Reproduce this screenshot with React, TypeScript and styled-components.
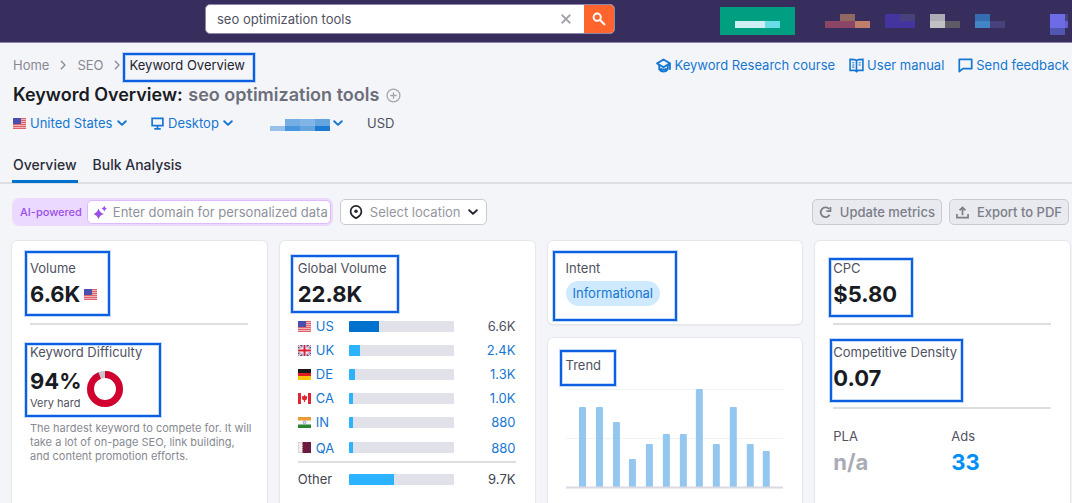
import React from "react";
import styled, { createGlobalStyle } from "styled-components";

const GlobalStyle = createGlobalStyle`
  *, *::before, *::after { box-sizing: border-box; }
  html, body { margin: 0; background: #f4f5f9; }
  body { font-family: Inter, "Liberation Sans", sans-serif; font-size: 13px; line-height: 16px; color: #50525f; }
  button, input, select { font: inherit; color: inherit; }
  h1, h2, p, ol { margin: 0; padding: 0; font-weight: 400; }
  a { color: #1577d1; text-decoration: none; }
  svg { display: block; flex: none; }
`;

/* ---------- page frame ---------- */

const Page = styled.div`
  height: 100vh;
  overflow-x: hidden;
  overflow-y: auto;
  scrollbar-width: none;
`;

const TopBar = styled.header`
  display: flex;
  align-items: flex-start;
  height: 43px;
  padding: 4px 4px 0 205px;
  background: #382e5e;
  border-bottom: 1px solid #8f87aa;
`;

const SearchForm = styled.form`
  display: flex;
  flex: 0 1 410px;
  height: 30px;
  border: 1px solid #8f87aa;
  border-radius: 5px;
  background: #fff;
  overflow: hidden;
`;

const SearchInput = styled.input`
  flex: 1;
  min-width: 0;
  padding: 0 11px;
  border: 0;
  outline: 0;
  background: transparent;
  color: #50525f;
`;

const IconButton = styled.button<{ $fill?: string; $width: number }>`
  display: flex;
  align-items: center;
  justify-content: center;
  width: ${(p) => p.$width}px;
  padding: 0;
  border: 0;
  background: ${(p) => p.$fill ?? "transparent"};
  cursor: pointer;
`;

const Account = styled.div`
  display: flex;
  align-items: flex-start;
  gap: 15px;
  margin-left: auto;
  padding-top: 3px;
`;

const AccountItem = styled.div<{ $before?: number; $drop?: number }>`
  margin-left: ${(p) => p.$before ?? 0}px;
  padding-top: ${(p) => p.$drop ?? 0}px;
`;

const Content = styled.main`
  padding-bottom: 16px;
`;

const Row = styled.div`
  display: flex;
  align-items: center;
`;

const CrumbRow = styled(Row)`
  justify-content: space-between;
  height: 24px;
  margin-top: 10px;
  padding: 0 3px 0 13px;
`;

const Crumbs = styled.ol`
  display: flex;
  align-items: center;
  list-style: none;
`;

const Crumb = styled.li<{ $gap: number }>`
  position: relative;
  display: flex;
  align-items: center;
  margin-right: ${(p) => p.$gap}px;
  color: #23242e;
  a { color: #878992; }
`;

const HelpLinks = styled.nav`
  display: flex;
  gap: 14px;
  a { display: flex; align-items: center; gap: 3px; }
`;

const TitleRow = styled(Row)`
  gap: 7px;
  height: 32px;
  margin-top: 2px;
  padding-left: 13px;
`;

const Title = styled.h1`
  font-size: 18px;
  line-height: 24px;
  font-weight: 600;
  color: #191b23;
  span { margin-left: 1px; color: #6c6e79; }
`;

const PickerRow = styled(Row)`
  gap: 24px;
  height: 24px;
  padding-left: 13px;
`;

const Picker = styled.label`
  display: flex;
  align-items: center;
  gap: 4px;
  color: #1577d1;
`;

const PlainSelect = styled.select`
  appearance: none;
  padding: 0;
  border: 0;
  outline: 0;
  background: transparent;
  cursor: pointer;
`;

const MaskedPicker = styled.button`
  display: flex;
  align-items: center;
  gap: 3px;
  margin-left: 13px;
  padding: 4px 0 0;
  border: 0;
  background: transparent;
  svg:last-child { margin-bottom: 4px; }
`;

const Tabs = styled.nav`
  display: flex;
  gap: 14px;
  margin-top: 16px;
  padding-left: 12px;
  border-bottom: 2px solid #dcdee4;
`;

const Tab = styled.a<{ $active?: boolean }>`
  height: 32px;
  margin-bottom: -1px;
  padding: 6px 1px 0;
  border-bottom: 3px solid ${(p) => (p.$active ? "#0071cd" : "transparent")};
  font-size: 14px;
  font-weight: 500;
  color: #2b2d38;
`;

const Toolbar = styled(Row)`
  gap: 7px;
  height: 28px;
  margin-top: 14px;
  padding: 0 3px 0 12px;
`;

const AiField = styled.label`
  display: flex;
  align-items: center;
  height: 28px;
  padding: 2px 2px 2px 8px;
  border-radius: 7px;
  background: #ecd9ff;
  color: #9a50e6;
  font-size: 11px;
  font-weight: 500;
`;

const AiBox = styled.span`
  display: flex;
  align-items: center;
  gap: 6px;
  width: 244px;
  height: 24px;
  margin-left: 5px;
  padding-left: 6px;
  border: 1px solid #dcbcfb;
  border-radius: 5px;
  background: #fff;
`;

const AiInput = styled.input`
  flex: 1;
  min-width: 0;
  padding: 0;
  border: 0;
  outline: 0;
  background: transparent;
  font-size: 13px;
  font-weight: 400;
  &::placeholder { color: #8f919b; opacity: 1; }
`;

const LocationField = styled.label`
  display: flex;
  align-items: center;
  gap: 7px;
  height: 26px;
  padding: 0 8px;
  border: 1px solid #c9cad2;
  border-radius: 5px;
  background: #fff;
  color: #94959f;
`;

const ToolButton = styled.button`
  display: flex;
  align-items: center;
  gap: 8px;
  height: 26px;
  padding: 0 6px;
  border: 1px solid #c9cad2;
  border-radius: 5px;
  background: #e9eaf0;
  color: #7b7d88;
  font-weight: 500;
`;

const ToolActions = styled.div`
  display: flex;
  gap: 7px;
  margin-left: auto;
`;

/* ---------- cards ---------- */

const CardGrid = styled.div`
  display: grid;
  grid-template-columns: repeat(4, minmax(0, 1fr));
  gap: 13px;
  margin-top: 15px;
  padding: 0 2px 0 12px;
`;

const Stack = styled.div`
  display: flex;
  flex-direction: column;
  gap: 14px;
`;

const Card = styled.section<{ $grow?: boolean }>`
  flex: ${(p) => (p.$grow ? 1 : "none")};
  padding: 19px 19px 24px 18px;
  border-radius: 5px;
  background: #fff;
  box-shadow: 0 0 0 1px #e6e7ed, 0 1px 2px #d0d2da;
`;

const IntentCard = styled(Card)`
  padding-bottom: 18px;
`;

const Metric = styled.div`
  position: relative;
`;

const Label = styled.h2`
  font-size: 13px;
  line-height: 16px;
  color: #50525f;
`;

const Value = styled.p<{ $color?: string }>`
  display: flex;
  align-items: center;
  gap: 4px;
  font-size: 22px;
  line-height: 28px;
  margin-top: 4px;
  font-weight: 700;
  color: ${(p) => p.$color ?? "#191b23"};
`;

const Divider = styled.hr`
  height: 2px;
  margin: 15px 0 19px;
  border: 0;
  background: #dddde2;
`;

const Difficulty = styled(Row)`
  gap: 4px;
  margin-top: 7px;
`;

const Small = styled.p`
  font-size: 11px;
  line-height: 16px;
`;

const DifficultyScore = styled.div`
  ${Value} { margin-top: 0; }
`;

const Hint = styled.p`
  margin: 10px -6px 0 0;
  font-size: 11px;
  line-height: 14px;
  color: #878992;
`;

const Pair = styled.div`
  display: grid;
  grid-template-columns: 118px 1fr;
`;

const Tag = styled.span`
  display: inline-block;
  margin-top: 5px;
  padding: 4px 7px 5px;
  border-radius: 13px;
  background: #cfe9ff;
  color: #1577d1;
`;

/* Highlight frame that lies over the block it marks. */
const Callout = styled.span<{ $top: number; $left: number; $width: number; $height: number }>`
  position: absolute;
  top: ${(p) => p.$top}px;
  left: ${(p) => p.$left}px;
  width: ${(p) => p.$width}px;
  height: ${(p) => p.$height}px;
  border: 2px solid #0b5fe0;
  box-shadow: 0 0 0 1px rgba(120, 170, 245, 0.45), inset 0 0 0 1px rgba(120, 170, 245, 0.45);
  pointer-events: none;
`;

const CountryTable = styled.table`
  width: 100%;
  margin-top: 6px;
  border-collapse: collapse;
  th, td { height: 24px; padding: 0; font-weight: 400; text-align: left; }
  th { width: 51px; }
  td:last-child { text-align: right; }
  tbody tr:last-child > * { height: 28px; }
  tfoot th, tfoot td { height: 33px; border-top: 2px solid #dddde2; color: #43454f; }
`;

const CountryName = styled.span`
  display: flex;
  align-items: center;
  gap: 5px;
`;

const Track = styled.div`
  width: 105px;
  height: 11px;
  border-radius: 1px;
  background: #e0e1e9;
  overflow: hidden;
`;

const Fill = styled.div<{ $dark?: boolean }>`
  height: 100%;
  background: ${(p) => (p.$dark ? "#0071cd" : "#2bb3ff")};
`;

const Chart = styled.svg`
  width: 100%;
  height: auto;
  margin-top: 16px;
`;

/* ---------- drawings ---------- */

type Tile = [number, number, number, number, string];

function Mosaic({ w, h, tiles }: { w: number; h: number; tiles: Tile[] }) {
  return (
    <svg width={w} height={h} shapeRendering="crispEdges" aria-hidden="true">
      {tiles.map(([x, y, tw, th, c], i) => (
        <rect key={i} x={x} y={y} width={tw} height={th} fill={c} />
      ))}
    </svg>
  );
}

function Chevron({ right, color = "currentColor", size = 10 }: { right?: boolean; color?: string; size?: number }) {
  return (
    <svg width={size} height={size} viewBox="0 0 10 10" fill="none" stroke={color} strokeWidth={right ? 1.3 : 1.9} strokeLinecap="round" strokeLinejoin="round" aria-hidden="true">
      <path d={right ? "M3.3 1.3 7 5 3.3 8.7" : "M1.2 3.2 5 6.9 8.8 3.2"} />
    </svg>
  );
}

function Flag({ code }: { code: string }) {
  const art: Record<string, React.ReactNode> = {
    US: (
      <>
        <rect width="13" height="11" fill="#f0b3b8" />
        {[0, 2, 4, 6, 8, 10].map((y) => (
          <rect key={y} y={y} width="13" height="1" fill="#e0636c" />
        ))}
        <rect width="8" height="6" fill="#4a4fae" />
      </>
    ),
    UK: (
      <>
        <rect width="13" height="11" fill="#3d4f9b" />
        <path d="M0 0 13 11M13 0 0 11" stroke="#fff" strokeWidth="2" />
        <path d="M0 0 13 11M13 0 0 11" stroke="#d8414c" strokeWidth=".7" />
        <path d="M6.5 0v11M0 5.5h13" stroke="#fff" strokeWidth="4" />
        <path d="M6.5 0v11M0 5.5h13" stroke="#d81f34" strokeWidth="2" />
      </>
    ),
    DE: (
      <>
        <rect width="13" height="4" fill="#1b1b1b" />
        <rect y="4" width="13" height="4" fill="#e01b22" />
        <rect y="7" width="13" height="4" fill="#fbc50f" />
      </>
    ),
    CA: (
      <>
        <rect width="13" height="11" fill="#fff" />
        <rect width="3" height="11" fill="#e02632" />
        <rect x="10" width="3" height="11" fill="#e02632" />
        <path d="M6.5 1.5 7.5 3.3 9.2 3.3 8.8 6.5 7 7.5v1.5h-1V7.5L4.2 6.5 3.8 3.3 5.5 3.3z" fill="#e02632" />
      </>
    ),
    IN: (
      <>
        <rect width="13" height="11" fill="#f7f8fa" />
        <rect width="13" height="3.5" fill="#ea9b32" />
        <rect y="7.5" width="13" height="3.5" fill="#2a8434" />
        <circle cx="6.5" cy="5.5" r="1.3" fill="none" stroke="#6c7fbd" strokeWidth=".8" />
      </>
    ),
    QA: (
      <>
        <rect width="13" height="11" fill="#6e1a3f" />
        <path d="M0 0h4l1 1-1 1 1 1.2-1 1.2 1 1.1-1 1.1 1 1.2-1 1.2 1 1-1 1H0z" fill="#f2eef0" />
        <path d="M.3 0v11M0 .3h4M0 10.7h4" stroke="#c3bec5" strokeWidth=".6" />
      </>
    ),
  };
  return (
    <svg width="13" height="11" viewBox="0 0 13 11" aria-hidden="true">
      {art[code]}
    </svg>
  );
}

const Glyph = ({ size = 14, children, w = 1.6, color = "currentColor" }: { size?: number; children: React.ReactNode; w?: number; color?: string }) => (
  <svg width={size} height={size} viewBox="0 0 14 14" fill="none" stroke={color} strokeWidth={w} aria-hidden="true">
    {children}
  </svg>
);

const countries = [
  { code: "US", share: 29, volume: "6.6K" },
  { code: "UK", share: 11, volume: "2.4K" },
  { code: "DE", share: 6, volume: "1.3K" },
  { code: "CA", share: 4, volume: "1.0K" },
  { code: "IN", share: 4, volume: "880" },
  { code: "QA", share: 4, volume: "880" },
];

const trend = [80, 80, 65, 28, 43, 53, 53, 98, 43, 80, 43, 36];

function TrendChart() {
  return (
    <Chart viewBox="0 0 218 100" role="img" aria-label="Trend by month">
      <path d="M0 .5h218M0 49.5h218" stroke="#f1f2f5" />
      {trend.map((h, i) => (
        <path key={i} d={`M${Math.round(13 + i * 16.75)} 98v-${h - 1}q0-1 1-1h5q1 0 1 1v${h - 1}z`} fill="#93c7ef" />
      ))}
      <path d="M0 98.5h218" stroke="#d9dae2" strokeWidth="2" />
    </Chart>
  );
}

export default function App() {
  return (
    <Page>
      <GlobalStyle />
      <TopBar>
        <SearchForm>
          <SearchInput aria-label="Search" defaultValue="seo optimization tools" />
          <IconButton type="button" aria-label="Clear" $width={36}>
            <Glyph size={12} color="#a3a4ae" w={2.2}><path d="m2 2 10 10M12 2 2 12" /></Glyph>
          </IconButton>
          <IconButton type="submit" aria-label="Run search" $width={30} $fill="#ff642d">
            <Glyph color="#fff" w={2}><circle cx="5.2" cy="5.2" r="3.6" /><path d="m8 8 5 5" /></Glyph>
          </IconButton>
        </SearchForm>
        <Account>
          <AccountItem>
            <Mosaic w={75} h={28} tiles={[[0, 0, 75, 28, "#009f81"], [15, 14, 30, 7, "#cdeff4"], [45, 14, 15, 7, "#69dde6"]]} />
          </AccountItem>
          <AccountItem $before={15} $drop={7}>
            <Mosaic w={45} h={14} tiles={[[15, 0, 15, 7, "#8f6962"], [0, 7, 30, 7, "#8b4565"], [30, 7, 15, 7, "#c07e6d"]]} />
          </AccountItem>
          <AccountItem $drop={7}>
            <Mosaic w={30} h={14} tiles={[[0, 0, 30, 14, "#4334a0"], [15, 0, 15, 7, "#47427c"]]} />
          </AccountItem>
          <AccountItem $drop={7}>
            <Mosaic w={30} h={14} tiles={[[0, 0, 15, 7, "#aeadb6"], [0, 7, 15, 7, "#c1c1c4"], [15, 7, 15, 7, "#5f5b66"]]} />
          </AccountItem>
          <AccountItem $drop={7}>
            <Mosaic w={30} h={14} tiles={[[0, 0, 15, 7, "#366db1"], [0, 7, 15, 7, "#4286c6"], [15, 7, 15, 7, "#47427c"]]} />
          </AccountItem>
          <AccountItem $before={30} $drop={7}>
            <Mosaic w={18} h={21} tiles={[[0, 0, 15, 14, "#6e6be6"], [15, 0, 3, 7, "#47427c"], [15, 7, 3, 7, "#6460c8"], [0, 14, 15, 7, "#5156b3"]]} />
          </AccountItem>
        </Account>
      </TopBar>

      <Content>
        <CrumbRow>
          <Crumbs>
            <Crumb $gap={9}><a href="#home">Home</a></Crumb>
            <Crumb $gap={9}><Chevron right color="#878992" /></Crumb>
            <Crumb $gap={8}><a href="#seo">SEO</a></Crumb>
            <Crumb $gap={8}><Chevron right color="#878992" /></Crumb>
            <Crumb $gap={0} aria-current="page">
              Keyword Overview
              <Callout $top={-4} $left={-7} $width={132} $height={29} />
            </Crumb>
          </Crumbs>
          <HelpLinks>
            <a href="#course">
              <Glyph size={15} w={1.7}>
                <path d="M7 1.4 13 5 7 8.6 1 5z" strokeLinejoin="round" />
                <path d="M3 6.5v4c1 1.6 2.5 2.2 4 2.2s3-.6 4-2.2v-4M13 5v6M4 9.8c2 1.3 4 1.3 6 0" />
              </Glyph>
              Keyword Research course
            </a>
            <a href="#manual">
              <Glyph size={15} w={1.5}>
                <path d="M7 2.2C6 1.4 4.5 1.3 1 1.3v10.2h4.5L7 12.7l1.5-1.2H13V1.3C9.5 1.3 8 1.4 7 2.2v11" />
                <path d="M3 4.5h2M3 6.5h2M3 8.5h2M9 4.5h2M9 6.5h2" strokeWidth="1" />
              </Glyph>
              User manual
            </a>
            <a href="#feedback">
              <Glyph size={15} w={1.6}><path d="M1.2 1.3h11.6v8.7H4.5L1.2 12.8z" strokeLinejoin="round" /></Glyph>
              Send feedback
            </a>
          </HelpLinks>
        </CrumbRow>

        <TitleRow>
          <Title>Keyword Overview: <span>seo optimization tools</span></Title>
          <IconButton type="button" aria-label="Add keyword" $width={15}>
            <Glyph size={15} color="#a3a5ae" w={1.2}><circle cx="7" cy="7" r="6" /><path d="M7 4v6M4 7h6" /></Glyph>
          </IconButton>
        </TitleRow>

        <PickerRow>
          <Picker>
            <Flag code="US" />
            <PlainSelect aria-label="Country"><option>United States</option></PlainSelect>
            <Chevron />
          </Picker>
          <Picker>
            <Glyph size={13} w={1.8}><path d="M1.2 1.4h11.6v7.8H1.2zM7 9v3.5M3.5 12.8h7" /></Glyph>
            <PlainSelect aria-label="Device"><option>Desktop</option></PlainSelect>
            <Chevron />
          </Picker>
          <MaskedPicker type="button" aria-label="Date">
            <Mosaic w={60} h={12} tiles={[[0, 7, 15, 5, "#98c1ea"], [15, 0, 15, 7, "#74aee3"], [30, 0, 15, 7, "#82b5e5"], [45, 0, 15, 7, "#64a5e0"], [15, 7, 15, 5, "#4795dc"], [30, 7, 15, 5, "#64a5e0"], [45, 7, 15, 5, "#1c7ad3"]]} />
            <Chevron color="#1577d1" />
          </MaskedPicker>
          <span>USD</span>
        </PickerRow>

        <Tabs>
          <Tab href="#overview" $active>Overview</Tab>
          <Tab href="#bulk">Bulk Analysis</Tab>
        </Tabs>

        <Toolbar>
          <AiField>
            AI-powered
            <AiBox>
              <svg width="13" height="13" viewBox="0 0 13 13" fill="#9a50e6" aria-hidden="true">
                <path d="M4.5 2.5Q5.7 6.8 10 8 5.7 9.2 4.5 13 3.3 9.2 -.5 8 3.3 6.8 4.5 2.5zM10.3 -.4Q10.9 2 13 2.6 10.9 3.2 10.3 5.6 9.7 3.2 7.4 2.6 9.7 2 10.3 -.4z" />
              </svg>
              <AiInput placeholder="Enter domain for personalized data" />
            </AiBox>
          </AiField>
          <LocationField>
            <Glyph size={14} color="#23242e" w={1.7}>
              <path d="M7 .9a5.4 5.4 0 0 1 5.4 5.4C12.4 9.5 9.5 12 7 13.2 4.5 12 1.6 9.5 1.6 6.3A5.4 5.4 0 0 1 7 .9z" />
              <circle cx="7" cy="6.3" r="1.7" fill="#23242e" stroke="none" />
            </Glyph>
            <PlainSelect aria-label="Location"><option>Select location</option></PlainSelect>
            <Chevron color="#23242e" />
          </LocationField>
          <ToolActions>
            <ToolButton type="button">
              <Glyph size={13} w={1.9}><path d="M11.5 9.5A5.2 5.2 0 1 1 10.8 3.2" /><path d="M12.3 1v4.5H8" /></Glyph>
              Update metrics
            </ToolButton>
            <ToolButton type="button">
              <Glyph size={13} w={1.8}><path d="M1 8.5v4h12v-4M7 10V2M3.8 4.8 7 1.6l3.2 3.2" /></Glyph>
              Export to PDF
            </ToolButton>
          </ToolActions>
        </Toolbar>

        <CardGrid>
          <Card>
            <Metric>
              <Label>Volume</Label>
              <Value>6.6K <Flag code="US" /></Value>
              <Callout $top={-9} $left={-5} $width={85} $height={65} />
            </Metric>
            <Divider />
            <Metric>
              <Label>Keyword Difficulty</Label>
              <Difficulty>
                <DifficultyScore>
                  <Value>94%</Value>
                  <Small>Very hard</Small>
                </DifficultyScore>
                <svg width="38" height="38" viewBox="0 0 38 38" fill="none" strokeWidth="7" role="img" aria-label="94 percent">
                  <circle cx="19" cy="19" r="14.5" stroke="#c4c7cf" />
                  <circle cx="19" cy="19" r="14.5" stroke="#d1002f" pathLength="100" strokeDasharray="94 6" transform="rotate(-90 19 19)" />
                </svg>
              </Difficulty>
              <Callout $top={-1} $left={-5} $width={136} $height={74} />
            </Metric>
            <Hint>The hardest keyword to compete for. It will take a lot of on-page SEO, link building, and content promotion efforts.</Hint>
          </Card>

          <Card>
            <Metric>
              <Label>Global Volume</Label>
              <Value>22.8K</Value>
              <Callout $top={-5} $left={-7} $width={108} $height={58} />
            </Metric>
            <CountryTable>
              <tbody>
                {countries.map((c, i) => (
                  <tr key={c.code}>
                    <th scope="row"><CountryName><Flag code={c.code} /><a href={`#${c.code}`}>{c.code}</a></CountryName></th>
                    <td><Track><Fill $dark={i === 0} style={{ width: `${c.share}%` }} /></Track></td>
                    <td>{i === 0 ? c.volume : <a href={`#volume-${c.code}`}>{c.volume}</a>}</td>
                  </tr>
                ))}
              </tbody>
              <tfoot>
                <tr>
                  <th scope="row">Other</th>
                  <td><Track><Fill style={{ width: "43%" }} /></Track></td>
                  <td>9.7K</td>
                </tr>
              </tfoot>
            </CountryTable>
          </Card>

          <Stack>
            <IntentCard>
              <Metric>
                <Label>Intent</Label>
                <Tag>Informational</Tag>
                <Callout $top={-9} $left={-13} $width={124} $height={70} />
              </Metric>
            </IntentCard>
            <Card $grow>
              <Metric>
                <Label>Trend</Label>
                <Callout $top={-7} $left={-6} $width={56} $height={36} />
              </Metric>
              <TrendChart />
            </Card>
          </Stack>

          <Card>
            <Metric>
              <Label>CPC</Label>
              <Value>$5.80</Value>
              <Callout $top={-2} $left={-4} $width={84} $height={59} />
            </Metric>
            <Divider />
            <Metric>
              <Label>Competitive Density</Label>
              <Value>0.07</Value>
              <Callout $top={-5} $left={-3} $width={133} $height={63} />
            </Metric>
            <Divider />
            <Pair>
              <Metric>
                <Label>PLA</Label>
                <Value $color="#a9abb6">n/a</Value>
              </Metric>
              <Metric>
                <Label>Ads</Label>
                <Value $color="#008ff8">33</Value>
              </Metric>
            </Pair>
          </Card>
        </CardGrid>
      </Content>
    </Page>
  );
}
